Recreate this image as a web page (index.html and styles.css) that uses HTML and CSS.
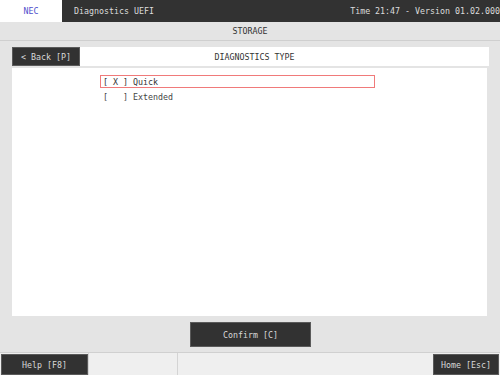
FILE: index.html
```html
<!DOCTYPE html>
<html>
<head>
<meta charset="utf-8">
<link rel="stylesheet" href="styles.css">
</head>
<body>
<div class="screen">
  <div class="top">
    <div class="brand">NEC</div>
    <div class="titlebar">
      <span class="title">Diagnostics UEFI</span>
      <span class="time">Time 21:47 - Version 01.02.000</span>
    </div>
  </div>
  <div class="sub">STORAGE</div>
  <div class="main">
    <div class="head">
      <div class="back">&lt; Back [P]</div>
      <div class="headtitle">DIAGNOSTICS TYPE</div>
    </div>
    <div class="content">
      <div class="opt selected">[ X ] Quick</div>
      <div class="opt">[&nbsp;&nbsp; ] Extended</div>
    </div>
    <div class="actions">
      <div class="confirm">Confirm [C]</div>
    </div>
  </div>
  <div class="bottom">
    <div class="fbtn help">Help [F8]</div>
    <div class="cell"></div>
    <div class="cell grow"></div>
    <div class="fbtn home">Home [Esc]</div>
  </div>
</div>
</body>
</html>
```

FILE: styles.css
```css
* { box-sizing: border-box; }
html, body { margin: 0; padding: 0; }
body {
  width: 500px;
  height: 375px;
  overflow: hidden;
  font-family: "DejaVu Sans Mono", "Liberation Mono", monospace;
  font-size: 8.3px;
  color: #444;
  background: #e4e4e4;
}
.screen { display: flex; flex-direction: column; height: 375px; }
.top { display: flex; height: 22px; }
.brand {
  width: 62px;
  background: #fff;
  color: #5050cc;
  display: flex; align-items: center; justify-content: center;
}
.titlebar {
  flex: 1;
  background: #323232;
  color: #dcdcdc;
  display: flex; align-items: center; justify-content: space-between;
  padding-left: 12px;
  white-space: nowrap;
  overflow: hidden;
}
.time { margin-right: 0; }
.sub {
  height: 19px;
  background: #e4e4e4;
  border-bottom: 1px solid #cfcfcf;
  display: flex; align-items: center; justify-content: center;
  color: #333;
}
.main {
  flex: 1;
  background: #e4e4e4;
  display: flex; flex-direction: column;
  padding: 6px 12px 0 12px;
}
.head { display: flex; height: 19px; }
.back {
  width: 68px;
  background: #323232;
  border: 1px solid #5a5a5a;
  color: #d8d8d8;
  display: flex; align-items: center; justify-content: center;
}
.headtitle {
  flex: 1;
  margin-right: -1px;
  background: #fff;
  display: flex; align-items: center; justify-content: center;
  padding-right: 60px;
  color: #333;
}
.content {
  margin-top: 2px;
  height: 248px;
  margin-right: 1px;
  background: #fff;
  padding: 7px 0 0 88px;
  display: flex; flex-direction: column;
}
.opt {
  width: 275px;
  height: 13px;
  padding-left: 2px;
  display: flex; align-items: center;
  white-space: pre;
  margin-bottom: 2px;
  border: 1px solid transparent;
}
.opt.selected { border-color: #f07a7a; color: #333; }
.actions {
  flex: 1;
  display: flex; justify-content: center;
  padding-top: 6px;
  padding-left: 1px;
}
.confirm {
  width: 121px;
  height: 25px;
  background: #323232;
  border: 1px solid #5a5a5a;
  color: #d8d8d8;
  display: flex; align-items: center; justify-content: center;
}
.bottom {
  height: 23px;
  background: #efefef;
  border-top: 1px solid #d0d0d0;
  display: flex;
  align-items: stretch;
}
.fbtn {
  background: #323232;
  color: #d8d8d8;
  border: 1px solid #5a5a5a;
  display: flex; align-items: center; justify-content: center;
  margin: 1px 0 0 0;
}
.help { width: 87px; margin-left: 1px; }
.cell { width: 89px; border-left: 1px solid #d4d4d4; }
.cell.grow { flex: 1; }
.home { width: 66px; margin-right: 1px; }
```
